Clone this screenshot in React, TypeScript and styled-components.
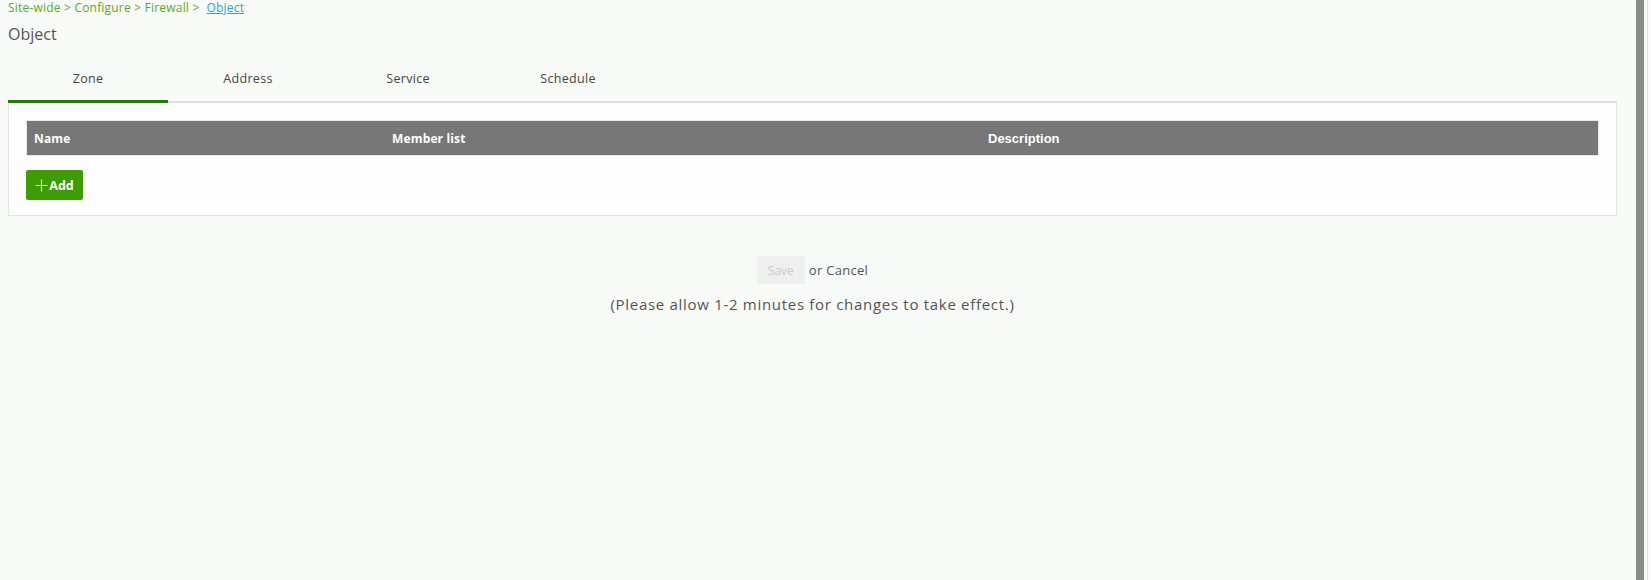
import React, { useState } from 'react';
import styled, { createGlobalStyle } from 'styled-components';

const GlobalStyle = createGlobalStyle`
  html, body {
    margin: 0;
    padding: 0;
    background: #f8faf7;
    font-family: 'Open Sans', 'Liberation Sans', sans-serif;
    color: #555;
  }
`;

const tabs = ['Zone', 'Address', 'Service', 'Schedule'];

const App = () => {
  const [tab, setTab] = useState<number>(0);
  return (
    <>
      <GlobalStyle />
      <Page>
        <Main>
          <Breadcrumb>
            Site-wide &gt; Configure &gt; Firewall &gt;
            <a href="#">Object</a>
          </Breadcrumb>
          <Title>Object</Title>
          <TabBar>
            {tabs.map((t, i) => (
              <Tab key={t} active={i === tab} onClick={() => setTab(i)}>
                {t}
              </Tab>
            ))}
          </TabBar>
          <Panel>
            <TableHead>
              <div>Name</div>
              <div>Member list</div>
              <div className="desc">Description</div>
            </TableHead>
            <AddButton>
              <svg width="13" height="13" viewBox="0 0 13 13">
                <path d="M6.5 0.5v12M0.5 6.5h12" stroke="#cfe9bf" strokeWidth="1.2" fill="none" />
              </svg>
              Add
            </AddButton>
          </Panel>
          <Footer>
            <div className="actions">
              <SaveButton disabled>Save</SaveButton>
              <span>or Cancel</span>
            </div>
            <Note>(Please allow 1-2 minutes for changes to take effect.)</Note>
          </Footer>
        </Main>
        <Rail>
          <div className="thumb" />
          <div className="edge" />
        </Rail>
      </Page>
    </>
  );
};

const Page = styled.div`
  display: flex;
  height: 580px;
  overflow: hidden;
`;

const Main = styled.div`
  flex: 1;
  padding: 0 19px 0 8px;
  min-width: 0;
`;

const Breadcrumb = styled.div`
  font-size: 12px;
  line-height: 16px;
  letter-spacing: 0.2px;
  color: #5aab28;
  white-space: nowrap;
  & a {
    color: #22a6e8;
    margin-left: 7px;
  }
`;

const Title = styled.div`
  font-size: 16px;
  line-height: 20px;
  margin-top: 8px;
  color: #555;
`;

const TabBar = styled.div`
  display: flex;
  margin-top: 12px;
  border-bottom: 2px solid #dedede;
`;

const Tab = styled.div<{ active?: boolean }>`
  width: 160px;
  height: 47px;
  display: flex;
  align-items: center;
  justify-content: center;
  font-size: 12.5px;
  letter-spacing: 0.3px;
  color: #444;
  cursor: pointer;
  box-sizing: border-box;
  border-bottom: 3px solid ${({ active }) => (active ? '#1e7b0c' : 'transparent')};
  margin-bottom: -2px;
`;

const Panel = styled.div`
  background: #fdfdfd;
  border: 1px solid #e3e3e3;
  border-top: none;
  padding: 17px 17px 15px;
`;

const TableHead = styled.div`
  display: grid;
  grid-template-columns: 358px 596px 1fr;
  height: 36px;
  box-sizing: border-box;
  align-items: center;
  background: #777;
  border: 1px solid #e6e6e6;
  color: #fff;
  font-weight: 700;
  font-size: 12px;
  letter-spacing: 0.15px;
  & > div {
    padding-left: 7px;
  }
  & .desc {
    font-family: 'Liberation Sans', sans-serif;
    font-size: 13px;
    letter-spacing: 0;
  }
`;

const AddButton = styled.button`
  margin-top: 14px;
  height: 30px;
  width: 57px;
  display: flex;
  align-items: center;
  justify-content: center;
  gap: 1px;
  background: #3d9d00;
  border: none;
  border-radius: 2px;
  color: #fff;
  font-family: 'Open Sans', 'Liberation Sans', sans-serif;
  font-weight: 700;
  font-size: 12.5px;
  padding: 0;
  cursor: pointer;
`;

const Footer = styled.div`
  margin-top: 40px;
  display: flex;
  flex-direction: column;
  align-items: center;
  & .actions {
    display: flex;
    align-items: center;
    gap: 4px;
    font-size: 13px;
    letter-spacing: 0.3px;
    color: #555;
  }
`;

const SaveButton = styled.button`
  width: 48px;
  height: 28px;
  background: #efefef;
  border: none;
  color: #cbcbcb;
  font-family: 'Open Sans', 'Liberation Sans', sans-serif;
  font-size: 12px;
  padding: 0;
`;

const Note = styled.div`
  margin-top: 10px;
  font-size: 15px;
  letter-spacing: 0.7px;
  color: #555;
`;

const Rail = styled.div`
  width: 15px;
  display: flex;
  & .thumb {
    width: 9px;
    background: #8a8a8a;
  }
  & .edge {
    width: 3px;
    margin-left: 3px;
    border-left: 1px solid #e2e2e2;
    background: #fbfbfb;
  }
`;

export default App;
